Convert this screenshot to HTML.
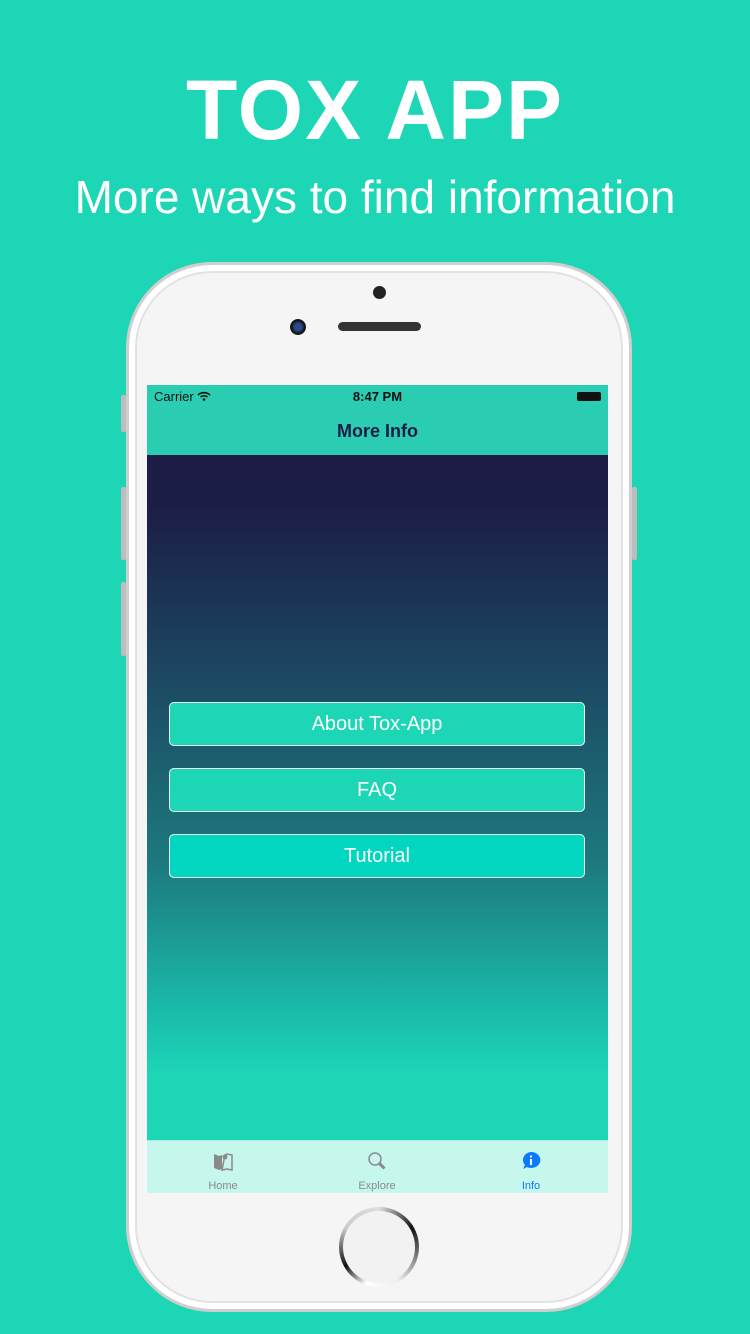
<!DOCTYPE html>
<html><head><meta charset="utf-8"><style>
*{margin:0;padding:0;box-sizing:border-box}
body{width:750px;height:1334px;background:#1cd6b6;position:relative;overflow:hidden;font-family:"Liberation Sans",sans-serif}
.h1{position:absolute;top:62px;left:0;width:750px;text-align:center;color:#fff;font-weight:bold;font-size:84px;letter-spacing:2px}
.h2{position:absolute;top:170px;left:0;width:750px;text-align:center;color:#fff;font-size:46px;font-weight:300}
.phone{position:absolute;left:126px;top:262px;width:506px;height:1050px;border-radius:86px;background:#f5f5f5;border:3px solid #cfcfcf;box-shadow:inset 0 0 0 6px #fff,inset 0 0 0 8px #e2e2e2}
.btn{position:absolute;background:#bdbdbd;width:5px;border-radius:2px}
.screen{position:absolute;left:147px;top:385px;width:461px;height:808px;overflow:hidden;background:linear-gradient(#1c1b45 0px,#1c1d47 120px,#1c4a63 300px,#1d7a7f 480px,#1ab8a8 620px,#1cd6b6 690px)}
.nav{position:absolute;top:0;left:0;width:461px;height:70px;background:#2bcdb2}
.sb{position:absolute;top:4px;font-size:13px;color:#111}
.title{position:absolute;top:36px;width:461px;text-align:center;font-size:18px;color:#1c1b45;font-weight:bold}
.b{position:absolute;left:22px;width:416px;height:44px;border:1.5px solid #e8fffb;border-radius:5px;background:#1cd6b6;color:#fff;text-align:center;line-height:43px;font-size:20px}
.tab{position:absolute;top:755px;left:0;width:461px;height:53px;background:#c6f7ec;border-top:1px solid #b0e8dc}
.tl{position:absolute;top:39px;font-size:11px;width:80px;text-align:center;color:#8a8a8a}
</style></head><body>
<div class="h1">TOX APP</div>
<div class="h2">More ways to find information</div>
<div class="btn" style="left:121px;top:395px;height:37px"></div>
<div class="btn" style="left:121px;top:487px;height:73px"></div>
<div class="btn" style="left:121px;top:582px;height:74px"></div>
<div class="btn" style="left:632px;top:487px;height:73px"></div>
<div class="phone"></div>
<div style="position:absolute;left:373px;top:286px;width:13px;height:13px;border-radius:50%;background:#222"></div>
<div style="position:absolute;left:290px;top:319px;width:16px;height:16px;border-radius:50%;background:radial-gradient(#2a4a8a 30%,#111 60%,#555)"></div>
<div style="position:absolute;left:338px;top:322px;width:83px;height:9px;border-radius:5px;background:#333"></div>
<div style="position:absolute;left:339px;top:1207px;width:80px;height:80px;border-radius:50%;background:conic-gradient(#ddd,#111 60deg,#eee 150deg,#fff 200deg,#111 240deg,#ccc 300deg,#ddd);"></div>
<div style="position:absolute;left:343px;top:1211px;width:72px;height:72px;border-radius:50%;background:#f2f2f2"></div>
<div class="screen">
<div class="nav">
<div class="sb" style="left:7px">Carrier <svg width="14" height="10" viewBox="0 0 14 10"><path d="M1 4a9 9 0 0 1 12 0M3.5 6a5.5 5.5 0 0 1 7 0" stroke="#111" stroke-width="1.6" fill="none"/><circle cx="7" cy="8.5" r="1.3" fill="#111"/></svg></div>
<div class="sb" style="left:0;width:461px;text-align:center;font-weight:bold">8:47 PM</div>
<div style="position:absolute;right:7px;top:7px;width:24px;height:9px;background:#111;border-radius:2px"></div>
<div class="title">More Info</div>
</div>
<div class="b" style="top:317px">About Tox-App</div>
<div class="b" style="top:383px">FAQ</div>
<div class="b" style="top:449px;background:#00d6c0">Tutorial</div>
<div class="tab">
<svg style="position:absolute;left:66px;top:10px" width="20" height="20" viewBox="0 0 20 20"><path d="M1 3l5 2 3-1v14l-3 1-5-2z" fill="#8a8a8a"/><path d="M12 4l2-1 5 1v15l-5-1-5 1z" fill="none" stroke="#8a8a8a" stroke-width="1.5"/><circle cx="12" cy="6" r="2.5" fill="#8a8a8a"/></svg>
<svg style="position:absolute;left:220px;top:10px" width="20" height="20" viewBox="0 0 20 20"><circle cx="8" cy="8" r="6" fill="none" stroke="#8a8a8a" stroke-width="1.5"/><path d="M12.5 12.5l5 5" stroke="#8a8a8a" stroke-width="3"/></svg>
<svg style="position:absolute;left:374px;top:10px" width="20" height="20" viewBox="0 0 20 20"><path d="M10 1a9 8 0 1 1-4 15l-4 2 2-4a9 8 0 0 1 6-13z" fill="#0a7aff"/><rect x="9" y="8" width="2" height="6" fill="#fff"/><circle cx="10" cy="5.5" r="1.1" fill="#fff"/></svg>
<div class="tl" style="left:36px">Home</div>
<div class="tl" style="left:190px">Explore</div>
<div class="tl" style="left:344px;color:#0a7aff">Info</div>
</div>
</div>
</body></html>
